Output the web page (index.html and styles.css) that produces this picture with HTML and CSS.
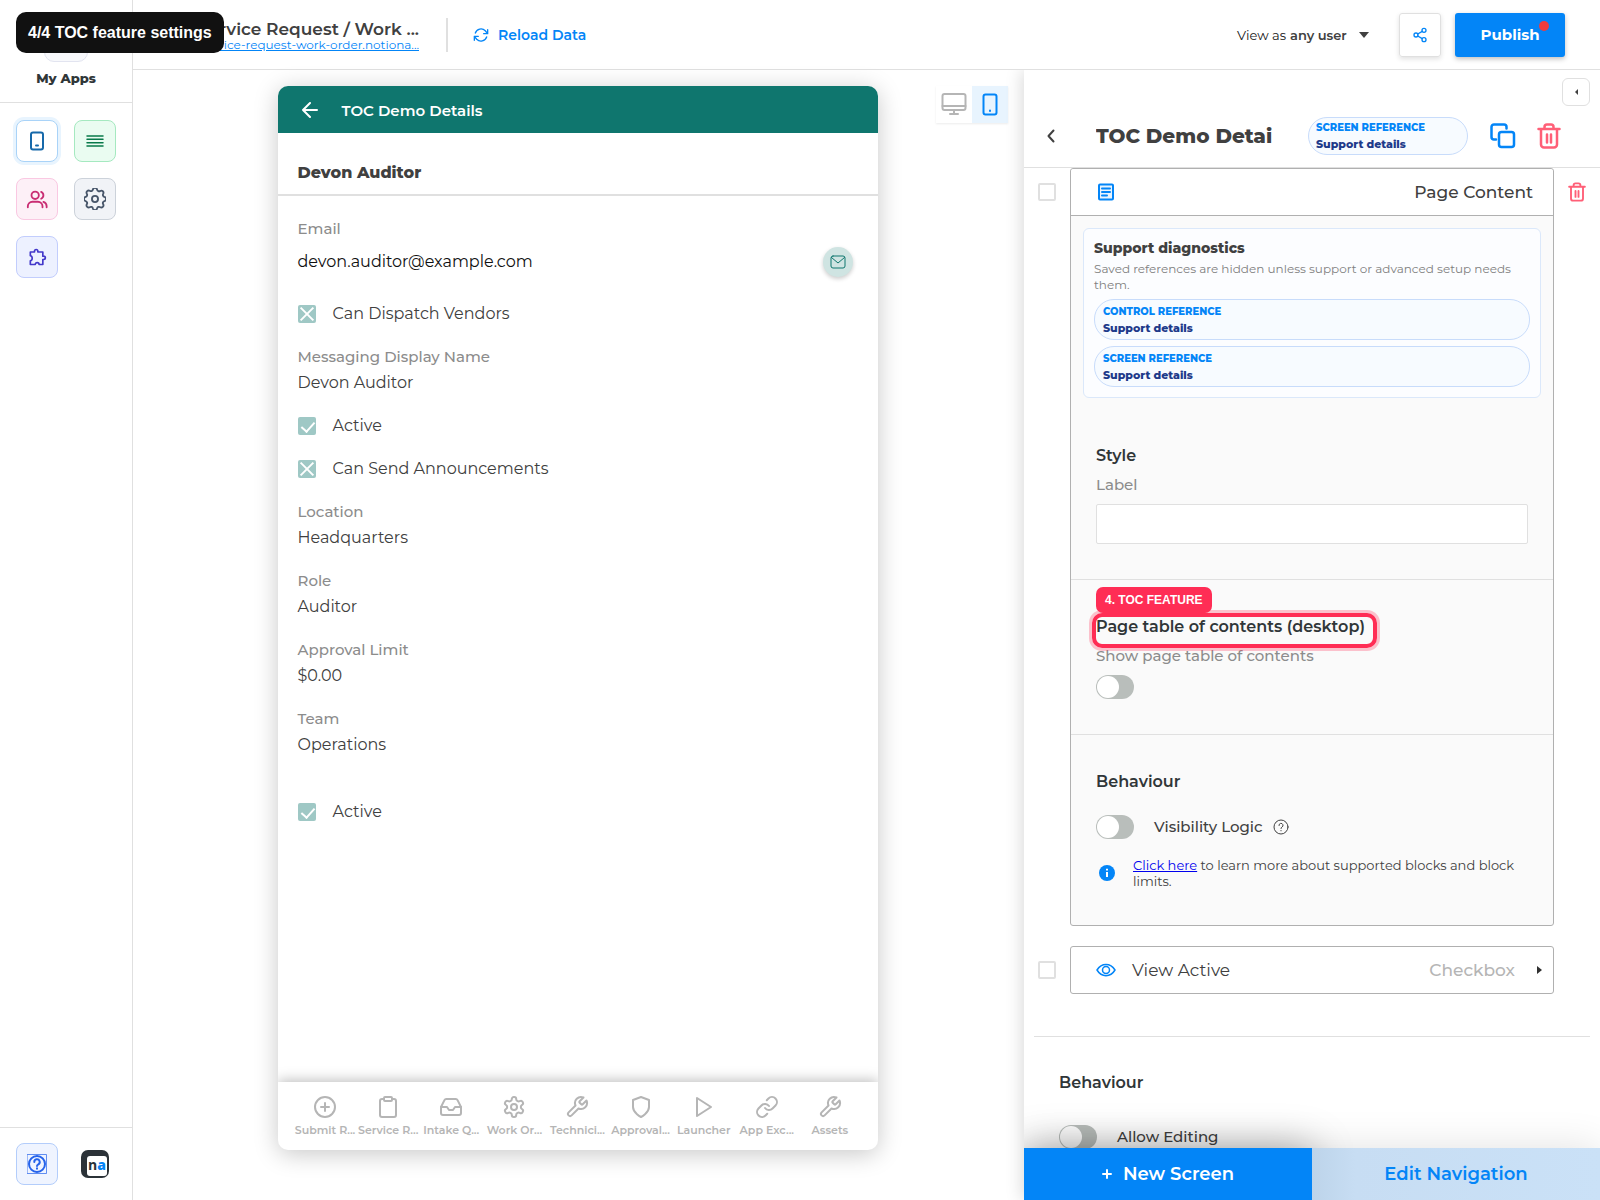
FILE: index.html
```html
<!DOCTYPE html>
<html lang="en">
<head>
<meta charset="utf-8">
<meta name="viewport" content="width=device-width, initial-scale=1">
<title>TOC Demo Details</title>
<link rel="stylesheet" href="styles.css">
</head>
<body>
<svg class="sprite" aria-hidden="true">
  <symbol id="i-wrench" viewBox="0 0 24 24"><path d="M14.700 6.300a1 1 0 0 0 0 1.400l1.600 1.600a1 1 0 0 0 1.400 0l3.770-3.770a6 6 0 0 1-7.940 7.940l-6.910 6.910a2.120 2.120 0 0 1-3-3l6.910-6.910a6 6 0 0 1 7.940-7.940z"/></symbol>
  <symbol id="i-trash" viewBox="0 0 24 26"><path d="M1.500 6h21M4 6v15.500A3 3 0 0 0 7 24.500h10a3 3 0 0 0 3-3V6M7.500 6V4a2.500 2.500 0 0 1 2.500-2.500h4A2.500 2.500 0 0 1 16.500 4v2M10 11.500v8M14 11.500v8"/></symbol>
</svg>

<div class="app">
  <nav class="sidebar" aria-label="Main">
    <div class="home">
      <span class="home-tile"></span>
      <a class="home-link" href="#">My Apps</a>
    </div>
    <div class="tiles">
      <button class="tile tile-screens" type="button" aria-label="Screens"><svg class="icon" width="20" height="20" viewBox="0 0 20 20"><rect x="4" y="1.500" width="12" height="17" rx="2"/><path d="M9 14.500h2"/></svg></button>
      <button class="tile tile-data" type="button" aria-label="Data"><svg class="icon" width="18" height="14" viewBox="0 0 18 14"><path d="M1 2h16M1 5.300h16M1 8.700h16M1 12h16"/></svg></button>
      <button class="tile tile-users" type="button" aria-label="Users"><svg class="icon" width="22" height="22" viewBox="0 0 24 24"><circle cx="10" cy="8" r="4"/><path d="M2 21v-1a5 5 0 0 1 5-5h6a5 5 0 0 1 5 5v1M16.500 4.300a4 4 0 0 1 0 7.400M19 15.200a5 5 0 0 1 3.500 4.800V21"/></svg></button>
      <button class="tile tile-settings" type="button" aria-label="Settings"><svg class="icon" width="22" height="22" viewBox="3 3 18 18"><circle cx="12" cy="12" r="2.500"/><path d="M10.300 4.300c.4-1.800 2.900-1.800 3.400 0a1.700 1.700 0 0 0 2.600 1.100c1.500-.9 3.300.8 2.400 2.400a1.700 1.700 0 0 0 1 2.500c1.800.4 1.800 2.900 0 3.400a1.700 1.700 0 0 0-1 2.600c.9 1.500-.9 3.300-2.400 2.400a1.700 1.700 0 0 0-2.600 1c-.4 1.800-2.900 1.800-3.400 0a1.700 1.700 0 0 0-2.600-1c-1.500.9-3.300-.9-2.400-2.400a1.700 1.700 0 0 0-1-2.600c-1.800-.4-1.800-2.900 0-3.400a1.700 1.700 0 0 0 1-2.600c-.9-1.500.9-3.300 2.400-2.400a1.700 1.700 0 0 0 2.600-1z"/></svg></button>
      <button class="tile tile-plugins" type="button" aria-label="Extensions"><svg class="icon" width="20" height="20" viewBox="0 0 24 24"><path d="M4 6h5V5a2 2 0 0 1 4 0v1h6v5h1a2 2 0 0 1 0 4h-1v6h-4.500a2.300 2.300 0 0 0-4.600 0H4v-4.500c3-.5 3-5.500 0-6z"/></svg></button>
    </div>
    <div class="sidebar-foot">
      <button class="tile tile-help" type="button" aria-label="Help"><svg class="icon" width="20" height="20" viewBox="0 0 20 20"><rect x=".5" y=".5" width="19" height="19" stroke-width="1" opacity=".7"/><circle cx="10" cy="10" r="8"/><path d="M7.300 8a2.700 2.700 0 1 1 4 2.300c-.9.5-1.300.9-1.300 1.700M10 14.300v.4"/></svg></button>
      <span class="logo"><span class="logo-face">n<b>a</b></span></span>
    </div>
  </nav>

  <header class="topbar">
    <div class="app-name">
      <h1 class="app-title">Service Request / Work ...</h1>
      <a class="app-url" href="#">service-request-work-order.notiona...</a>
    </div>
    <button class="reload" type="button"><svg class="icon" width="16" height="16" viewBox="0 0 24 24"><path d="M22 4v6h-6M2 20v-6h6M3.500 9A9 9 0 0 1 18.400 5.600L22 10M2 14l3.600 4.400A9 9 0 0 0 20.500 15"/></svg>Reload Data</button>
    <div class="top-actions">
      <div class="view-as">
        <label for="viewer">View as</label>
        <select id="viewer"><option>any user</option></select>
        <svg width="10" height="6" viewBox="0 0 10 6"><path d="M0 0h10L5 6z" fill="#404040"/></svg>
      </div>
      <button class="share" type="button" aria-label="Share"><svg class="icon" width="16" height="16" viewBox="0 0 24 24"><circle cx="18" cy="5" r="3"/><circle cx="6" cy="12" r="3"/><circle cx="18" cy="19" r="3"/><path d="M8.600 13.500l6.800 4M15.400 6.500l-6.800 4"/></svg></button>
      <button class="publish" type="button">Publish<span class="dot"></span></button>
    </div>
  </header>

  <main class="stage">
    <div class="devices">
      <button class="device" type="button" aria-label="Desktop"><svg class="icon" width="26" height="24" viewBox="0 0 26 24"><rect x="1.500" y="1" width="23" height="16" rx="2"/><path d="M1.500 13h23M13 17v4M9 21h8"/></svg></button>
      <button class="device device-on" type="button" aria-label="Phone"><svg class="icon" width="16" height="24" viewBox="0 0 16 24"><rect x="1.500" y="1.500" width="13" height="20" rx="2"/><path d="M8 17.500v.5"/></svg></button>
    </div>
    <section class="phone">
      <header class="phone-bar">
        <button class="back" type="button" aria-label="Back"><svg class="icon" width="16" height="18" viewBox="0 0 16 18"><path d="M15 9H1M8 2L1 9l7 7"/></svg></button>
        <h2 class="phone-title">TOC Demo Details</h2>
      </header>
      <h3 class="record-title">Devon Auditor</h3>
      <div class="record">
        <div class="field">
          <span class="field-label">Email</span>
          <div class="email-row"><span>devon.auditor@example.com</span><button class="mail" type="button" aria-label="Send email"><svg class="icon" width="16" height="14" viewBox="0 0 16 14"><rect x="1" y="1" width="14" height="12" rx="2"/><path d="M1.500 2.500L8 8l6.500-5.500"/></svg></button></div>
        </div>
        <label class="tick"><input class="box box-cross" type="checkbox">Can Dispatch Vendors</label>
        <div class="field"><span class="field-label">Messaging Display Name</span><span class="field-value">Devon Auditor</span></div>
        <label class="tick"><input class="box box-check" type="checkbox" checked>Active</label>
        <label class="tick"><input class="box box-cross" type="checkbox">Can Send Announcements</label>
        <div class="field"><span class="field-label">Location</span><span class="field-value">Headquarters</span></div>
        <div class="field"><span class="field-label">Role</span><span class="field-value">Auditor</span></div>
        <div class="field"><span class="field-label">Approval Limit</span><span class="field-value">$0.00</span></div>
        <div class="field"><span class="field-label">Team</span><span class="field-value">Operations</span></div>
        <label class="tick tick-apart"><input class="box box-check" type="checkbox" checked>Active</label>
      </div>
      <nav class="tabs" aria-label="App">
        <a class="tab" href="#"><svg class="icon" width="24" height="24" viewBox="0 0 24 24"><circle cx="12" cy="12" r="10"/><path d="M12 8v8M8 12h8"/></svg>Submit R...</a>
        <a class="tab" href="#"><svg class="icon" width="24" height="24" viewBox="0 0 24 24"><path d="M16 4h2a2 2 0 0 1 2 2v14a2 2 0 0 1-2 2H6a2 2 0 0 1-2-2V6a2 2 0 0 1 2-2h2"/><rect x="8" y="2" width="8" height="4" rx="1"/></svg>Service R...</a>
        <a class="tab" href="#"><svg class="icon" width="24" height="24" viewBox="0 0 24 24"><path d="M22 12h-6l-2 3h-4l-2-3H2"/><path d="M5.450 5.110L2 12v6a2 2 0 0 0 2 2h16a2 2 0 0 0 2-2v-6l-3.450-6.890A2 2 0 0 0 16.760 4H7.240a2 2 0 0 0-1.790 1.110z"/></svg>Intake Q...</a>
        <a class="tab" href="#"><svg class="icon" width="24" height="24" viewBox="0 0 24 24"><circle cx="12" cy="12" r="3"/><path d="M12.220 2h-.44a2 2 0 0 0-2 2v.18a2 2 0 0 1-1 1.730l-.43.25a2 2 0 0 1-2 0l-.15-.08a2 2 0 0 0-2.730.73l-.22.38a2 2 0 0 0 .73 2.730l.15.1a2 2 0 0 1 1 1.720v.51a2 2 0 0 1-1 1.740l-.15.09a2 2 0 0 0-.73 2.730l.22.38a2 2 0 0 0 2.730.73l.15-.08a2 2 0 0 1 2 0l.43.25a2 2 0 0 1 1 1.730V20a2 2 0 0 0 2 2h.44a2 2 0 0 0 2-2v-.18a2 2 0 0 1 1-1.730l.43-.25a2 2 0 0 1 2 0l.15.08a2 2 0 0 0 2.730-.73l.22-.39a2 2 0 0 0-.73-2.730l-.15-.08a2 2 0 0 1-1-1.740v-.5a2 2 0 0 1 1-1.740l.15-.09a2 2 0 0 0 .73-2.730l-.22-.38a2 2 0 0 0-2.730-.73l-.15.08a2 2 0 0 1-2 0l-.43-.25a2 2 0 0 1-1-1.730V4a2 2 0 0 0-2-2z"/></svg>Work Or...</a>
        <a class="tab" href="#"><svg class="icon" width="24" height="24"><use href="#i-wrench"/></svg>Technici...</a>
        <a class="tab" href="#"><svg class="icon" width="24" height="24" viewBox="0 0 24 24"><path d="M12 22s8-4 8-10V5l-8-3-8 3v7c0 6 8 10 8 10z"/></svg>Approval...</a>
        <a class="tab" href="#"><svg class="icon" width="24" height="24" viewBox="0 0 24 24"><path d="M5 3l14 9-14 9z"/></svg>Launcher</a>
        <a class="tab" href="#"><svg class="icon" width="24" height="24" viewBox="0 0 24 24"><path d="M10 13a5 5 0 0 0 7.540.54l3-3a5 5 0 0 0-7.070-7.070l-1.720 1.710"/><path d="M14 11a5 5 0 0 0-7.540-.54l-3 3a5 5 0 0 0 7.070 7.070l1.710-1.710"/></svg>App Exc...</a>
        <a class="tab" href="#"><svg class="icon" width="24" height="24"><use href="#i-wrench"/></svg>Assets</a>
      </nav>
    </section>
  </main>

  <aside class="panel">
    <header class="panel-head">
      <button class="collapse" type="button" aria-label="Collapse panel"><svg width="3" height="6" viewBox="0 0 3 6"><path d="M3 0v6L0 3z" fill="#404040"/></svg></button>
      <div class="panel-row">
        <button class="plain" type="button" aria-label="Back to screens"><svg class="icon" width="8" height="14" viewBox="0 0 8 14"><path d="M6.500 1.500L1.500 7l5 5.500"/></svg></button>
        <input class="screen-name" aria-label="Screen name" value="TOC Demo Detai">
        <div class="ref ref-head"><b class="ref-kind">SCREEN REFERENCE</b><span class="ref-name">Support details</span></div>
        <button class="plain blue" type="button" aria-label="Duplicate"><svg class="icon bold" width="26" height="26" viewBox="0 0 26 26"><rect x="9" y="9" width="15" height="15" rx="2.500"/><path d="M6 16.500H4A2.500 2.500 0 0 1 1.500 14V4A2.500 2.500 0 0 1 4 1.500h10A2.500 2.500 0 0 1 16.500 4v1.500"/></svg></button>
        <button class="plain red" type="button" aria-label="Delete screen"><svg class="icon bold" width="24" height="26"><use href="#i-trash"/></svg></button>
      </div>
    </header>

    <div class="panel-body">
      <div class="block">
        <input class="pick" type="checkbox" aria-label="Select Page Content">
        <section class="card">
          <header class="card-head">
            <svg class="icon blue" width="18" height="18" viewBox="0 0 18 18"><rect x="2" y="1.500" width="14" height="15" rx="1" fill="#e8f4fe"/><path d="M5 5.500h8M5 9h8M5 12.500h5"/></svg>
            <h3 class="card-type-dark">Page Content</h3>
          </header>
          <div class="card-body">
            <div class="diag">
              <h4 class="diag-title">Support diagnostics</h4>
              <p class="diag-text">Saved references are hidden unless support or advanced setup needs them.</p>
              <div class="ref"><b class="ref-kind">CONTROL REFERENCE</b><span class="ref-name">Support details</span></div>
              <div class="ref"><b class="ref-kind">SCREEN REFERENCE</b><span class="ref-name">Support details</span></div>
            </div>
            <div class="group group-style">
              <h4 class="group-title">Style</h4>
              <label class="sub" for="style-label">Label</label>
              <input class="text" id="style-label" type="text">
            </div>
            <div class="group">
              <h4 class="group-title marked">Page table of contents (desktop)<span class="mark"></span><span class="mark-tag">4. TOC FEATURE</span></h4>
              <label class="sub" for="toc">Show page table of contents</label>
              <input class="toggle" id="toc" type="checkbox">
            </div>
            <div class="group group-last">
              <h4 class="group-title">Behaviour</h4>
              <div class="switch-row"><input class="toggle" id="vis" type="checkbox"><label for="vis">Visibility Logic</label><svg class="icon thin" width="16" height="16" viewBox="0 0 16 16"><circle cx="8" cy="8" r="7"/><path d="M6 6.500a2 2 0 1 1 3 1.600c-.7.400-1 .7-1 1.400M8 11.500v.3"/></svg></div>
              <div class="note"><svg width="16" height="16" viewBox="0 0 16 16"><circle cx="8" cy="8" r="8" fill="#0385f7"/><path d="M8 7v5M8 3.700v1.800" stroke="#fff" stroke-width="2"/></svg><p><a href="#">Click here</a> to learn more about supported blocks and block limits.</p></div>
            </div>
          </div>
        </section>
        <button class="plain red block-del" type="button" aria-label="Delete block"><svg class="icon bold" width="18" height="20"><use href="#i-trash"/></svg></button>
      </div>

      <div class="block">
        <input class="pick" type="checkbox" aria-label="Select View Active">
        <section class="card card-closed">
          <svg class="icon blue" width="20" height="14" viewBox="0 0 20 14"><path d="M1 7c4.500-7.500 13.500-7.500 18 0-4.500 7.500-13.500 7.500-18 0z"/><circle cx="10" cy="7" r="3.500"/></svg>
          <h3 class="card-name">View Active</h3>
          <span class="card-type">Checkbox</span>
          <svg width="5" height="8" viewBox="0 0 5 8"><path d="M0 0l5 4-5 4z" fill="#303030"/></svg>
        </section>
      </div>

      <section class="screen-opts">
        <h4 class="group-title">Behaviour</h4>
        <div class="switch-row"><input class="toggle" id="edit" type="checkbox"><label for="edit">Allow Editing</label></div>
      </section>
    </div>

    <footer class="panel-foot">
      <button class="new-screen" type="button"><svg class="icon" width="10" height="10" viewBox="0 0 10 10"><path d="M5 1v8M1 5h8"/></svg>New Screen</button>
      <button class="edit-nav" type="button">Edit Navigation</button>
    </footer>
  </aside>
</div>
<div class="caption">4/4 TOC feature settings</div>
</body>
</html>
```
FILE: styles.css
```css
* { box-sizing: border-box; }
html, body { height: 100%; }
body {
  margin: 0;
  font-family: "Montserrat", "Inter", sans-serif;
  font-size: 16px;
  color: #404040;
  background: #fff;
}
h1, h2, h3, h4, p { margin: 0; }
button, input, select { font: inherit; color: inherit; margin: 0; }
button { border: 0; padding: 0; background: none; display: flex; align-items: center; justify-content: center; }
svg { flex: none; display: block; }
.sprite { position: absolute; width: 0; height: 0; }
.icon { fill: none; stroke: currentColor; stroke-width: 2; stroke-linecap: round; stroke-linejoin: round; }
.thin { stroke-width: 1; }
.bold { stroke-width: 2.500; }
.blue { color: #0385f7; }
.red { color: #ff5f77; }

.app {
  display: grid;
  grid-template-columns: 133px minmax(0, 1fr) 36%;
  grid-template-rows: 70px minmax(0, 1fr);
  height: 100vh;
  overflow: hidden;
}

/* Sidebar */
.sidebar { grid-row: 1 / 3; border-right: 1px solid #e0e0e0; display: flex; flex-direction: column; }
.home { height: 103px; border-bottom: 1px solid #e0e0e0; display: flex; flex-direction: column; align-items: center; padding-top: 18px; gap: 6px; }
.home-tile { width: 44px; height: 44px; border: 1px solid #e2e4f0; border-radius: 10px; background: #f8f9fc; }
.home-link { font-size: 13px; line-height: 20px; font-weight: 800; color: #303638; text-decoration: none; }
.tiles { display: grid; grid-template-columns: 42px 42px; gap: 16px; padding: 17px 16px; flex: 1; align-content: start; }
.tile { width: 42px; height: 42px; border: 1px solid; border-radius: 8px; }
.tile-screens { color: #1769aa; border-color: #a9d3f8; background: #fff; box-shadow: 0 0 0 3px #e8f4fe; }
.tile-data { color: #08794a; border-color: #a5e9c0; background: #eafcf1; }
.tile-data .icon { stroke-width: 1.500; }
.tile-users { color: #c92d73; border-color: #fac8e2; background: #fdf0f7; }
.tile-settings { color: #475569; border-color: #ccd2da; background: #f1f3f7; }
.tile-settings .icon { stroke-width: 1.500; }
.tile-plugins { color: #4338ca; border-color: #c2cdfd; background: #edf1ff; }
.tile-help { color: #2563eb; border-color: #b3cdfb; background: #eff4ff; }
.sidebar-foot { border-top: 1px solid #e0e0e0; display: flex; align-items: center; gap: 23px; padding: 15px 16px; }
.logo { width: 28px; height: 28px; border-radius: 7px; background: #2b3238; padding: 6px 2px 2px 6px; }
.logo-face { display: block; height: 20px; border-radius: 3px; background: #fff; font: 700 14px/17px "Open Sans", sans-serif; color: #2b3238; text-align: center; }
.logo-face b { color: #0385f7; }

/* Top bar */
.topbar { grid-column: 2 / 4; border-bottom: 1px solid #e0e0e0; display: flex; align-items: center; padding: 0 35px 0 48px; }
.app-name { width: 267px; height: 34px; border-right: 2px solid #e0e0e0; display: flex; flex-direction: column; align-items: flex-end; justify-content: center; padding-right: 27px; white-space: nowrap; }
.app-title { font-size: 17px; line-height: 20px; font-weight: 600; }
.app-url { font-size: 12px; line-height: 12px; color: #0385f7; }
.reload { gap: 9px; margin-left: 25px; font-size: 14px; font-weight: 600; color: #0385f7; }
.top-actions { margin-left: auto; display: flex; align-items: center; gap: 14px; }
.view-as { display: flex; align-items: center; font-size: 13px; color: #202020; margin-right: 16px; }
.view-as select { appearance: none; border: 0; background: none; padding: 0 12px 0 4px; font-weight: 600; color: #404040; }
.share { width: 42px; height: 44px; border: 1px solid #e0e0e0; border-radius: 3px; color: #0385f7; box-shadow: 0 2px 5px rgba(0, 0, 0, .12); }
.publish { position: relative; width: 110px; height: 44px; border-radius: 3px; background: #0385f7; color: #fff; font-size: 15px; font-weight: 700; box-shadow: 0 2px 5px rgba(0, 0, 0, .25); }
.dot { position: absolute; top: 8px; right: 16px; width: 10px; height: 10px; border-radius: 50%; background: #f03c3c; }

/* Phone preview */
.stage { position: relative; display: flex; justify-content: center; padding: 16px 18px 50px 16px; }
.devices { position: absolute; top: 16px; right: 16px; display: flex; box-shadow: 0 1px 2px rgba(0, 0, 0, .08); }
.device { width: 36px; height: 37px; color: #b5b5b5; }
.device-on { background: #e8f4fe; color: #0385f7; }
.phone { width: 600px; max-width: 100%; border-radius: 10px; overflow: hidden; display: flex; flex-direction: column; box-shadow: 0 4px 24px rgba(0, 0, 0, .22); }
.phone-bar { height: 47px; background: #0f766e; color: #fff; display: flex; align-items: center; gap: 24px; padding: 1px 24px 0; }
.phone-title { font-size: 15px; font-weight: 600; }
.record-title { height: 63px; border-bottom: 2px solid #e0e0e0; padding: 28px 20px 0; font-size: 16px; line-height: 24px; font-weight: 800; }
.record { flex: 1; min-height: 0; display: flex; flex-direction: column; gap: 17px; padding: 20px 20px 19px; line-height: 26px; }
.field { display: flex; flex-direction: column; }
.field-label { font-size: 15px; font-weight: 500; color: #8c8c8c; }
.field-value { font-size: 16px; }
.email-row { height: 42px; display: flex; align-items: center; justify-content: space-between; padding: 0 5px 3px 0; font-size: 16px; color: #101010; }
.mail { width: 30px; height: 30px; border-radius: 50%; background: #cfe4e2; color: #0f766e; box-shadow: 0 2px 4px rgba(0, 0, 0, .2); }
.mail .icon { stroke-width: 1; }
.tick { display: flex; align-items: center; gap: 17px; font-size: 16px; }
.tick-apart { margin-top: 24px; }
.box { appearance: none; position: relative; width: 18px; height: 18px; border-radius: 2px; background: #9fc8c5; }
.box::before, .box::after { content: ""; position: absolute; }
.box-cross::before, .box-cross::after { top: 8px; left: 0; width: 18px; height: 2px; background: #fff; transform: rotate(45deg); }
.box-cross::after { transform: rotate(-45deg); }
.box-check::after { top: 2px; left: 6px; width: 6px; height: 11px; border: solid #fff; border-width: 0 2px 2px 0; transform: rotate(42deg); }
.tabs { height: 68px; display: grid; grid-template-columns: repeat(9, minmax(0, 1fr)); padding: 13px 16px; box-shadow: 0 -2px 12px rgba(0, 0, 0, .25); }
.tab { display: flex; flex-direction: column; align-items: center; gap: 4px; font-size: 11px; line-height: 14px; font-weight: 600; color: #b5b5b5; text-decoration: none; white-space: nowrap; }

/* Settings panel */
.panel { display: flex; flex-direction: column; min-height: 0; position: relative; overflow: hidden; background: #fff; box-shadow: -2px 0 16px rgba(0, 0, 0, .15); clip-path: inset(0 0 0 -30px); }
.panel-head { height: 98px; border-bottom: 1px solid #e0e0e0; display: flex; flex-direction: column; flex: none; padding-top: 8px; }
.collapse { width: 28px; height: 28px; align-self: flex-end; margin-right: 10px; border: 1px solid #e0e0e0; border-radius: 6px; }
.panel-row { display: flex; align-items: center; padding: 11px 39px 0 23px; }
.screen-name { flex: 1; min-width: 0; border: 0; padding: 0; margin-left: 41px; font-size: 20px; font-weight: 800; background: none; }
.ref { border: 1px solid #c8dcfb; border-radius: 20px; background: #f7fbff; padding: 4px 8px 3px; display: flex; flex-direction: column; line-height: 16px; }
.ref-kind { font-size: 10px; font-weight: 800; color: #0385f7; }
.ref-name { font-size: 11px; font-weight: 800; color: #1e3a8a; }
.ref-head { width: 160px; height: 38px; padding: 2px 7px; margin-right: 22px; }
.panel-row .plain + .plain { margin-left: 21px; }
.panel-body { flex: 1; min-height: 0; overflow: hidden; }
.block { display: flex; align-items: flex-start; padding: 0 14px 20px 14px; }
.pick { appearance: none; width: 18px; height: 18px; margin: 15px 14px 0 0; border: 2px solid #e0e0e0; border-radius: 2px; flex: none; }
.block-del { margin: 14px 0 0 14px; }
.card { flex: 1; min-width: 0; border: 1px solid #b0b0b0; border-radius: 3px; background: #fafafa; }
.card-head { height: 47px; border-bottom: 1px solid #b0b0b0; border-radius: 3px 3px 0 0; background: #fff; display: flex; align-items: center; justify-content: space-between; padding: 0 20px 0 26px; }
.card-type-dark { font-size: 17px; font-weight: 500; }
.diag { margin: 12px; border: 1px solid #dbe8fa; border-radius: 6px; background: #fcfdff; padding: 10px; display: flex; flex-direction: column; gap: 6px; }
.diag-title { font-size: 14px; line-height: 18px; font-weight: 800; }
.diag-text { margin-top: -2px; font-size: 12px; line-height: 16px; color: #808080; }
.group { padding: 37px 25px 35px; border-bottom: 1px solid #e0e0e0; display: flex; flex-direction: column; align-items: flex-start; }
.group-style { padding-top: 36px; }
.group-title { font-size: 16px; line-height: 20px; font-weight: 600; color: #303638; }
.sub { font-size: 15px; line-height: 20px; font-weight: 500; color: #8c8c8c; margin: 9px 0; }
.text { width: 100%; height: 40px; border: 1px solid #e0e0e0; border-radius: 2px; background: #fff; }
.group-last { border-bottom: 0; padding-bottom: 36px; }
.marked { position: relative; }
.mark { position: absolute; top: -4px; right: -12px; bottom: -11px; left: -4px; border: 4px solid #ff2d55; border-radius: 10px; box-shadow: 0 0 0 3px rgba(255, 45, 85, .28); }
.mark-tag { position: absolute; left: 0; bottom: 24px; padding: 0 9px; border-radius: 7px; background: #ff2d55; color: #fff; font: 700 12px/26px "Liberation Sans", sans-serif; white-space: nowrap; }
.toggle { appearance: none; width: 38px; height: 24px; border-radius: 12px; background: #b9bebb; padding: 1px; flex: none; }
.toggle::before { content: ""; display: block; width: 22px; height: 22px; border-radius: 50%; background: #fff; }
.switch-row { display: flex; align-items: center; margin-top: 23px; font-size: 15px; font-weight: 500; line-height: 24px; }
.switch-row label { margin: 0 10px 0 20px; }
.note { display: flex; align-items: center; gap: 18px; margin-top: 18px; padding-left: 3px; font-size: 13px; line-height: 16px; }
.note a { color: #0000ee; }
.card-closed { height: 48px; display: flex; align-items: center; background: #fff; padding: 0 11px 0 25px; margin-right: 32px; }
.card-closed .icon { stroke-width: 1.500; }
.card-name { font-size: 17px; font-weight: 400; margin-left: 16px; }
.card-type { margin: 0 22px 0 auto; font-size: 17px; font-weight: 500; color: #b5b5b5; }
.screen-opts { margin: 22px 10px 0; border-top: 1px solid #e0e0e0; padding: 36px 25px; }
.screen-opts .switch-row { margin-top: 32px; }
.panel-foot { position: relative; display: grid; grid-template-columns: 1fr 1fr; height: 52px; flex: none; font-size: 18px; font-weight: 600; box-shadow: 0 0 40px rgba(0, 0, 0, .12); }
.new-screen { gap: 11px; background: #0385f7; color: #fff; box-shadow: 0 0 40px rgba(0, 0, 0, .35); }
.edit-nav { background: linear-gradient(90deg, #bdd4ea, #c7ddf3 15%, #cae1f7); color: #0385f7; }

/* Tour caption */
.caption { position: fixed; top: 12px; left: 16px; padding: 10px 12px; border-radius: 10px; background: #111; color: #fff; font: 700 16px/21px "Liberation Sans", sans-serif; }
```
